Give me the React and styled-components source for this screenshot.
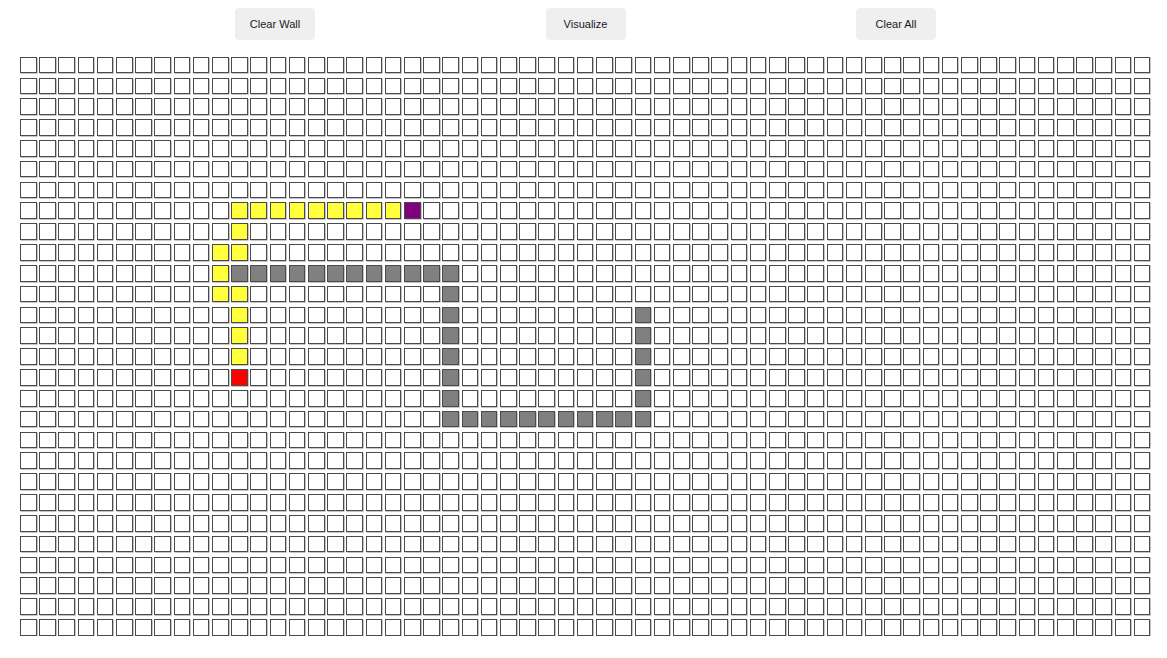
import React from 'react'
import styled, { createGlobalStyle } from 'styled-components';

const ROWS = 28
const COLS = 59

const Global = createGlobalStyle`
   body {
      margin: 0;
      background: #fff;
      font-family: "Liberation Sans", Arial, sans-serif;
   }
`

const Toolbar = styled.div`
   display: flex;
   justify-content: center;
   gap: 230.5px;
   padding: 8px 0 0 4px;
   height: 32px;
`

const Button = styled.button`
   width: 80px;
   height: 31.5px;
   border: none;
   border-radius: 4px;
   background: #efefef;
   color: #1a1a1a;
   font-family: "Liberation Sans", Arial, sans-serif;
   font-size: 11px;
   padding: 0;
   cursor: pointer;
`

const Board = styled.div`
   display: grid;
   grid-template-columns: repeat(${COLS}, 16.6px);
   grid-auto-rows: 16.6px;
   column-gap: 2.61px;
   row-gap: 4.24px;
   margin: 16.7px 0 0 20px;
`

const colours = {
   empty: '#fff',
   wall: '#808080',
   path: '#ffff3b',
   start: '#ff0000',
   end: '#800080',
}

const Cell = styled.div`
   box-sizing: border-box;
   border: 1px solid #4a4a4a;
   box-shadow: 0.6px 0.6px 0 #a0a0a0;
   background: ${({ kind }) => colours[kind]};
`

// marked cells of the board: row -> { col: kind }
const marks = {}
const mark = (r, c, kind) => {
   marks[r] = marks[r] || {}
   marks[r][c] = kind
}
for (let c = 11; c <= 19; c++) mark(7, c, 'path')
mark(7, 20, 'end')
mark(8, 11, 'path')
mark(9, 10, 'path')
mark(9, 11, 'path')
mark(10, 10, 'path')
for (let c = 11; c <= 22; c++) mark(10, c, 'wall')
mark(11, 10, 'path')
mark(11, 11, 'path')
mark(11, 22, 'wall')
for (let r = 12; r <= 16; r++) {
   mark(r, 22, 'wall')
   mark(r, 32, 'wall')
   if (r <= 14) mark(r, 11, 'path')
}
mark(15, 11, 'start')
for (let c = 22; c <= 32; c++) mark(17, c, 'wall')

const App = () => {
   const cells = []
   for (let r = 0; r < ROWS; r++) {
      for (let c = 0; c < COLS; c++) {
         const kind = (marks[r] && marks[r][c]) || 'empty'
         cells.push(<Cell key={`${r}-${c}`} kind={kind} />)
      }
   }
   return (
      <>
         <Global />
         <Toolbar>
            <Button>Clear Wall</Button>
            <Button>Visualize</Button>
            <Button>Clear All</Button>
         </Toolbar>
         <Board>{cells}</Board>
      </>
   )
}

export default App
